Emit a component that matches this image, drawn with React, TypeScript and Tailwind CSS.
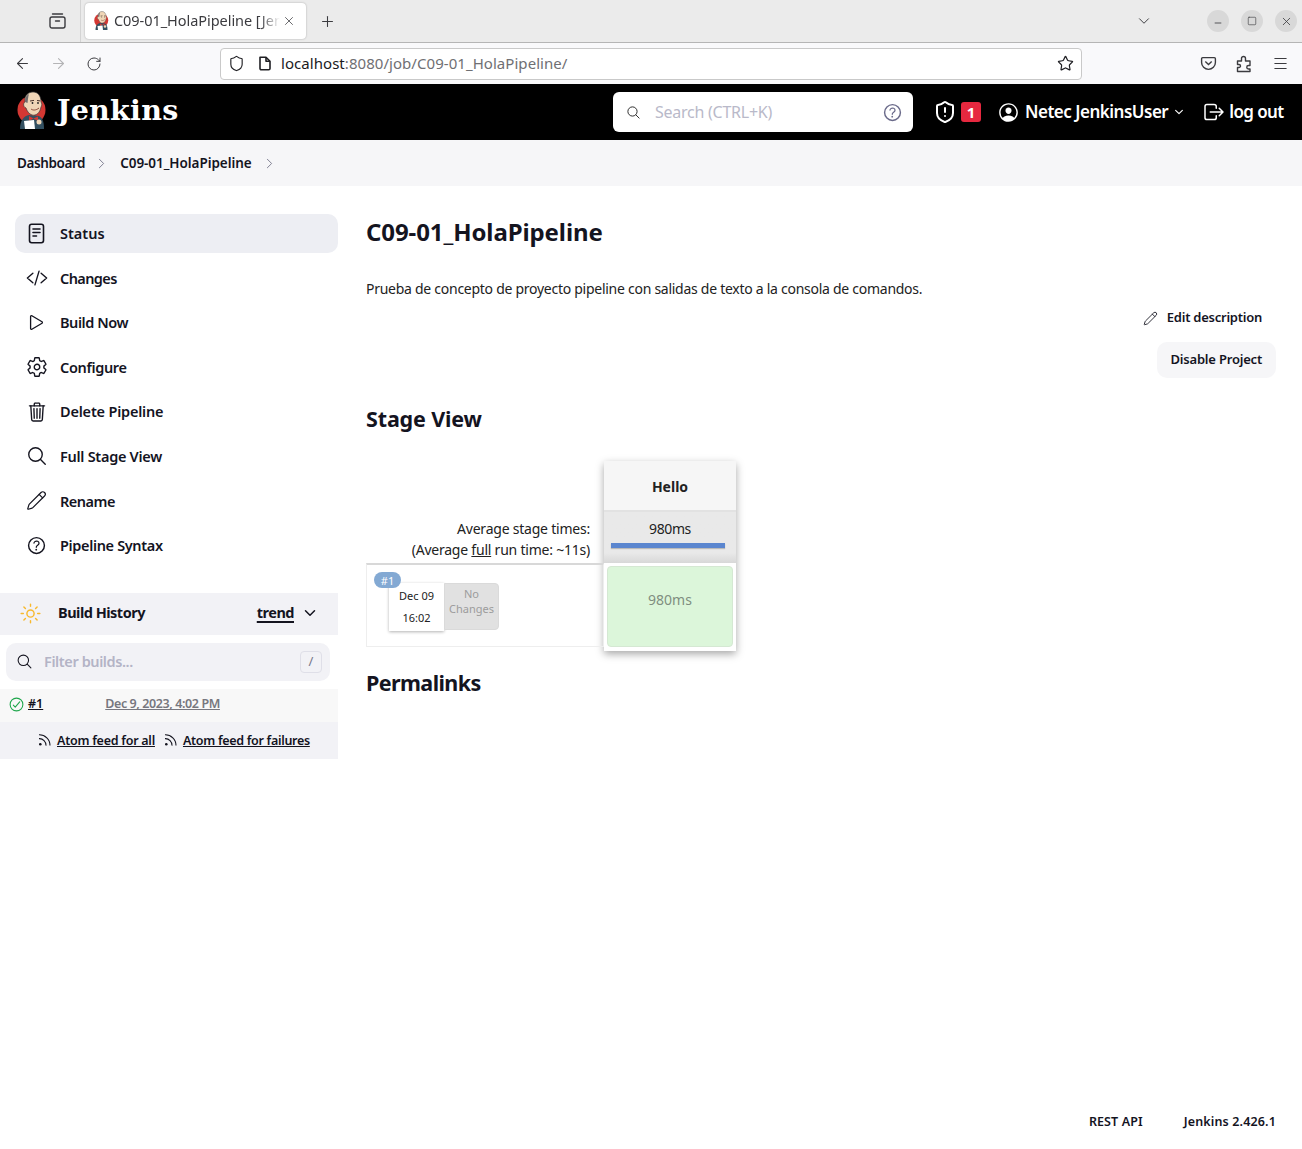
import React from "react";
import { ArrowLeft, ArrowRight, RotateCw, X, Plus, ChevronDown, ChevronRight, Star, Menu, Minus, Square, ShieldAlert, Shield, Pencil } from "lucide-react";
import { IoCodeSlashOutline, IoPlayOutline, IoSettingsOutline, IoTrashOutline, IoSearchOutline, IoHelpCircleOutline, IoSunnyOutline, IoLogOutOutline, IoPersonCircleOutline, IoChevronDown, IoCheckmarkCircleOutline } from "react-icons/io5";

const font = "font-['Noto_Sans',sans-serif]";

function Butler({ size }: { size: number }) {
  return (
    <svg width={size} height={size * 1.3} viewBox="0 0 30 39" className="shrink-0">
      <circle cx="14.5" cy="19" r="14" fill="#d33833" />
      <path d="M3 38 C3 29 7 25 12 24 L22 25 C26 27 27 32 27 38 Z" fill="#335061" />
      <path d="M8 11 C7 4 12 1 16 1 C21 1 24 5 24 11 C25 12 25 15 24 16 C23 22 19 25 15 24 C12 23 10 20 9 17 C6 16 6 12 8 11 Z" fill="#f0d6b7" stroke="#3a3a3a" strokeWidth="0.7" />
      <path d="M8 11 C8 6 10 4 12 3 C11 6 11 9 10.5 12 Z" fill="#6d6b6d" />
      <path d="M13 10 l4 -0.6 M20 9.5 l3 0.4" stroke="#49322a" strokeWidth="1" />
      <circle cx="15.5" cy="12" r="0.9" fill="#222" />
      <circle cx="21" cy="12" r="0.9" fill="#222" />
      <path d="M14 18 C16 19.5 19 19.5 22 17" stroke="#8a4b3a" strokeWidth="1" fill="none" />
      <path d="M12 25 L16.5 27.5 L21 25.5 L21 30 L16.5 27.5 L12 30 Z" fill="#d33833" />
      <path d="M7 30 L17 29 L18 38 L8 38 Z" fill="#fff" />
      <circle cx="22" cy="31" r="2.5" fill="#f0d6b7" />
    </svg>
  );
}

function StatusIcon({ size = 21 }: { size?: number }) {
  return (
    <svg width={size} height={size} viewBox="0 0 21 21" fill="none" stroke="currentColor" strokeWidth="1.6" strokeLinecap="round" className="shrink-0">
      <rect x="3.5" y="1.2" width="14" height="18.6" rx="2.2" />
      <path d="M7 6h7M7 9.5h7M7 13h3.5" />
    </svg>
  );
}

function RenameIcon({ size = 21 }: { size?: number }) {
  return <Pencil size={size} strokeWidth={1.4} />;
}

function Feed() {
  return (
    <svg width="14" height="15" viewBox="0 0 14 15" fill="none" stroke="currentColor" strokeWidth="1.1" className="shrink-0">
      <circle cx="2.3" cy="12.3" r="1.3" fill="currentColor" stroke="none" />
      <path d="M1 6.6a6.6 6.6 0 0 1 7 7" />
      <path d="M1 2.8a10.6 10.6 0 0 1 11 10.8" />
    </svg>
  );
}

const items: [string, any, number, string, boolean?][] = [
  ["Status", StatusIcon, 21, "", true],
  ["Changes", IoCodeSlashOutline, 22, "tracking-[-0.6px]"],
  ["Build Now", IoPlayOutline, 21, "tracking-[-0.45px]"],
  ["Configure", IoSettingsOutline, 22, "tracking-[-0.35px]"],
  ["Delete Pipeline", IoTrashOutline, 22, "tracking-[-0.2px]"],
  ["Full Stage View", IoSearchOutline, 22, "tracking-[-0.28px]"],
  ["Rename", RenameIcon, 21, "tracking-[-0.5px]"],
  ["Pipeline Syntax", IoHelpCircleOutline, 23, "tracking-[-0.35px]"],
];

function BrowserChrome() {
  return (
    <div className="text-[#3b3b3f]">
      <div className="h-[43px] bg-[#ebebeb] border-b border-[#b5b5b5] flex items-start">
        <div className="w-[81px] h-[42px] border-r border-[#d4d4d4] flex items-center justify-end pr-[14px]">
          <svg width="17" height="16" viewBox="0 0 17 16" fill="none" stroke="currentColor" strokeWidth="1.4" strokeLinecap="round">
            <path d="M3.5 1h10" />
            <rect x="1" y="4" width="15" height="11" rx="2" />
            <path d="M6.5 8h4" />
          </svg>
        </div>
        <div className="ml-[4px] mt-[3px] w-[221px] h-[36px] bg-white rounded-[4px] shadow-[0_0_2px_rgba(0,0,0,0.3)] flex items-center pl-[9px] pr-[10px]">
          <Butler size={15} />
          <span className="ml-[5px] text-[14.5px] whitespace-nowrap overflow-hidden w-[167px] tracking-[-0.05px] [mask-image:linear-gradient(to_right,black_88%,transparent)]">C09-01_HolaPipeline [Jenkins]</span>
          <X size={14} strokeWidth={1.3} className="ml-[2px] shrink-0" />
        </div>
        <div className="ml-[13px] h-[42px] flex items-center"><Plus size={17} strokeWidth={1.5} /></div>
        <div className="flex-1" />
        <div className="h-[42px] flex items-center mr-[54px]"><ChevronDown size={18} strokeWidth={1.3} /></div>
        <div className="h-[42px] flex items-center gap-[12px] pr-[5px]">
          <span className="w-[22px] h-[22px] rounded-full bg-[#d8d8d8] flex items-center justify-center pt-[4px]"><Minus size={10} /></span>
          <span className="w-[22px] h-[22px] rounded-full bg-[#d8d8d8] flex items-center justify-center"><Square size={10} strokeWidth={1.5} /></span>
          <span className="w-[22px] h-[22px] rounded-full bg-[#d8d8d8] flex items-center justify-center"><X size={13} strokeWidth={1.5} /></span>
        </div>
      </div>
      <div className="h-[41px] bg-[#f9f9fb] flex items-center relative">
        <div className="w-[220px] flex items-center pl-[14px] gap-[19px] shrink-0">
          <ArrowLeft size={17} strokeWidth={1.5} />
          <ArrowRight size={17} strokeWidth={1.5} className="text-[#b4b4b6]" />
          <RotateCw size={16} strokeWidth={1.5} />
        </div>
        <div className="w-[862px] h-[32px] bg-white border border-[#c9c9c9] rounded-[4px] flex items-center pl-[7px] pr-[6px] text-[15px]">
          <Shield size={17} strokeWidth={1.6} className="text-[#1f1f23]" />
          <svg width="14" height="15" viewBox="0 0 14 15" fill="none" stroke="#1f1f23" strokeWidth="1.6" strokeLinejoin="round" className="ml-[13px]">
            <path d="M2 1.2h6l4 4v7.3a1.3 1.3 0 0 1-1.3 1.3H3.3A1.3 1.3 0 0 1 2 12.5z" />
            <path d="M8 1.2v4h4" />
          </svg>
          <span className="ml-[9px] text-[#1a1a1e] tracking-[0.05px]">localhost<span className="text-[#6f6f73]">:8080/job/C09-01_HolaPipeline/</span></span>
          <Star size={17} strokeWidth={1.7} className="ml-auto mr-[1px] text-[#1f1f23]" />
        </div>
        <div className="flex items-center gap-[19px] ml-[118px]">
          <svg width="17" height="17" viewBox="0 0 16 16" fill="none" stroke="currentColor" strokeWidth="1.3"><path d="M2.5 2.5h11a1 1 0 0 1 1 1V7a6.5 6.5 0 0 1-13 0V3.5a1 1 0 0 1 1-1z" /><path d="M5 6.2 8 9l3-2.8" /></svg>
          <svg width="16" height="18" viewBox="0 0 16 18" fill="none" stroke="currentColor" strokeWidth="1.4" strokeLinejoin="round">
            <path d="M1.5 6h4V3.500a2 2 0 0 1 4 0V6h4.500v4.500h-1.500a1.700 1.700 0 0 0 0 3.500h1.500v2.500H1.500v-4h1.500a1.500 1.500 0 0 0 0-3H1.500z" />
          </svg>
          <Menu size={17} strokeWidth={1.5} className="ml-[1px]" />
        </div>
      </div>
    </div>
  );
}

function JHeader() {
  return (
    <div className="h-[56px] bg-black flex items-center text-white">
      <div className="pl-[17px] flex items-center w-[613px] shrink-0 -mt-[4px]">
        <Butler size={30} />
        <span className="ml-[10px] font-['DejaVu_Serif',serif] font-bold text-[28.5px] tracking-[0.25px] leading-none">Jenkins</span>
      </div>
      <div className="w-[300px] h-[40px] bg-white rounded-[6px] flex items-center px-[13px]">
        <IoSearchOutline size={15} className="text-[#222]" />
        <span className="ml-[14px] text-[#b9b9c9] text-[16px] tracking-[-0.25px]">Search (CTRL+K)</span>
        <IoHelpCircleOutline size={23} className="ml-auto -mr-[4px] text-[#6a6a8a]" />
      </div>
      <ShieldAlert size={24} strokeWidth={2} className="ml-[20px] shrink-0" />
      <span className="ml-[4px] w-[20px] h-[20px] bg-[#e6283f] rounded-[3px] flex items-center justify-center text-[15px] font-bold">1</span>
      <IoPersonCircleOutline size={23} className="ml-[16px] shrink-0" />
      <span className="ml-[5px] text-[17px] font-semibold tracking-[-0.5px] whitespace-nowrap">Netec JenkinsUser</span>
      <IoChevronDown size={12} className="ml-[5px] shrink-0" />
      <IoLogOutOutline size={24} className="ml-[17px] shrink-0" />
      <span className="ml-[3px] text-[17px] font-semibold tracking-[-0.6px] whitespace-nowrap">log out</span>
    </div>
  );
}

function Breadcrumb() {
  return (
    <div className="h-[46px] bg-[#f6f6f8] flex items-center pl-[17px] text-[13.5px] font-semibold text-[#14141f]">
      <span className="tracking-[-0.4px]">Dashboard</span>
      <ChevronRight size={17} strokeWidth={1.3} className="ml-[8px] text-[#77778a]" />
      <span className="ml-[10px] tracking-[-0.05px]">C09-01_HolaPipeline</span>
      <ChevronRight size={17} strokeWidth={1.3} className="ml-[9px] text-[#77778a]" />
    </div>
  );
}

function Sidebar() {
  return (
    <div className="w-[338px] shrink-0 text-[#14141f] pt-[28px]">
      <div className="pl-[15px] flex flex-col">
        {items.map(([label, Icon, s, track, active]) => (
          <div key={label} className={`h-[39px] mb-[5.565px] flex items-center rounded-[10px] ${active ? "bg-[#edeef3]" : ""}`}>
            <span className="w-[45px] pr-[2px] flex justify-center shrink-0"><Icon size={s} /></span>
            <span className={`text-[14.5px] font-semibold pt-[1px] ${track}`}>{label}</span>
          </div>
        ))}
      </div>
      <div className="mt-[22.5px] h-[42px] bg-[#f2f2f6] flex items-center pl-[19px] pr-[20px] pb-[2px]">
        <IoSunnyOutline size={23} className="text-[#f8b92d]" />
        <span className="ml-[16px] text-[14.5px] font-bold tracking-[-0.5px]">Build History</span>
        <span className="ml-auto text-[14.5px] font-bold underline underline-offset-3 decoration-2 tracking-[-0.5px]">trend</span>
        <IoChevronDown size={16} className="ml-[8px]" />
      </div>
      <div className="mt-[8px] ml-[6px] w-[324px] h-[38px] bg-[#f2f2f6] rounded-[10px] flex items-center pl-[10px] pr-[8px] pb-[1px]">
        <IoSearchOutline size={17} />
        <span className="ml-[11px] text-[14.5px] text-[#b4b4c6] font-semibold tracking-[-0.4px]">Filter builds...</span>
        <span className="ml-auto w-[22px] h-[22px] border border-[#dfdfe8] rounded-[4px] flex items-center justify-center text-[13px] text-[#77778a]">/</span>
      </div>
      <div className="mt-[8px] h-[33px] bg-[#f8f8f8] flex items-center pl-[8px] pb-[2px] text-[12.5px] font-semibold">
        <IoCheckmarkCircleOutline size={17} className="text-[#1ea64b]" />
        <span className="ml-[3px] underline">#1</span>
        <span className="ml-[62px] underline text-[#77777f] tracking-[-0.4px]">Dec 9, 2023, 4:02 PM</span>
      </div>
      <div className="h-[37px] bg-[#f2f2f6] flex items-center pl-[38px] text-[12.5px] font-semibold pt-[1px]">
        <span className="-mt-[4px]"><Feed /></span>
        <span className="ml-[5px] underline tracking-[-0.25px]">Atom feed for all</span>
        <span className="-mt-[4px] ml-[9px]"><Feed /></span>
        <span className="ml-[5px] underline tracking-[-0.3px]">Atom feed for failures</span>
      </div>
    </div>
  );
}

function StageView() {
  return (
    <div className="flex w-[372px] mt-[26px]">
      <div className="w-[238px] shrink-0 pt-[51px]">
        <div className="h-[50px] text-right pr-[14px] text-[14px] leading-[21px] text-[#222] pt-[5px] tracking-[-0.22px]">
          <div>Average stage times:</div>
          <div>(Average <span className="underline">full</span> run time: ~11s)</div>
        </div>
        <div className="h-[84px] border border-t-2 border-[#eeeeee] border-t-[#d8d8d8] relative flex items-start pl-[22px] pt-[18px]">
          <span className="absolute left-[7px] top-[7px] w-[27px] h-[16px] rounded-full bg-[#83a9d3] text-white text-[11px] flex items-center justify-center leading-none">#1</span>
          <div className="w-[55px] h-[48px] bg-white shadow-[0_1px_3px_rgba(0,0,0,0.3)] text-[11px] text-[#222] text-center flex flex-col justify-between py-[6px] leading-[14px]">
            <div>Dec 09</div>
            <div>16:02</div>
          </div>
          <div className="w-[55px] h-[47px] bg-[#e1e1e1] border border-[#dadada] rounded-r-[4px] text-[11px] text-[#9c9c9c] text-center leading-[15px] pt-[2px]">
            <div>No</div>
            <div>Changes</div>
          </div>
        </div>
      </div>
      <div className="w-[132px] h-[190px] shrink-0 bg-white shadow-[0_3px_8px_rgba(0,0,0,0.35)] flex flex-col mt-[-1px]">
        <div className="h-[51px] bg-[#f6f6f6] border-b-2 border-[#e2e2e2] flex items-center justify-center text-[14px] font-bold text-[#222] pt-[1px]">Hello</div>
        <div className="h-[51px] bg-gradient-to-b from-[#e9e9e9] from-80% to-[#d8d8d8] pt-[7px] flex flex-col items-center">
          <div className="text-[14px] leading-[20px] text-[#222] tracking-[-0.4px]">980ms</div>
          <div className="mt-[4px] w-[114px] h-[5px] bg-[#5b86cf] self-start ml-[7px] shadow-[0_1px_1px_rgba(0,0,0,0.2)]" />
        </div>
        <div className="m-[3px] h-[81px] bg-[#dcf6da] border border-[#d5e8d3] rounded-[4px] flex items-center justify-center text-[14px] text-[#808e80] pb-[15px]">980ms</div>
      </div>
    </div>
  );
}

function Content() {
  return (
    <div className="flex-1 pl-[28px] pr-[26px] text-[#14141f] relative">
      <h1 className="pt-[29px] text-[24px] leading-[34px] font-bold tracking-[-0.1px]">C09-01_HolaPipeline</h1>
      <p className="mt-[30px] text-[14px] leading-[20px] text-[#222] tracking-[-0.27px]">Prueba de concepto de proyecto pipeline con salidas de texto a la consola de comandos.</p>
      <div className="flex flex-col items-end">
        <div className="h-[38px] flex items-center pr-[14px] text-[13px] font-semibold tracking-[-0.25px]">
          <Pencil size={15} strokeWidth={1.4} className="mr-[9px]" />Edit description
        </div>
        <div className="mt-[5px] h-[36px] px-[14px] bg-[#f6f6f8] rounded-[10px] flex items-center text-[13px] font-semibold tracking-[-0.2px]">Disable Project</div>
      </div>
      <h2 className="mt-[24px] text-[21.5px] leading-[34px] font-bold tracking-[-0.15px]">Stage View</h2>
      <StageView />
      <h2 className="mt-[15px] text-[21.5px] leading-[34px] font-bold tracking-[-0.6px]">Permalinks</h2>
    </div>
  );
}

export default function App() {
  return (
    <div className={`${font} w-[1302px] h-[1149px] bg-white flex flex-col overflow-hidden`}>
      <BrowserChrome />
      <JHeader />
      <Breadcrumb />
      <div className="flex flex-1">
        <Sidebar />
        <Content />
      </div>
      <div className="h-[36px] flex items-start justify-end pr-[26px] text-[12.5px] font-semibold text-[#14141f] gap-[41px]">
        <span className="tracking-[0.1px]">REST API</span>
        <span className="tracking-[0.15px]">Jenkins 2.426.1</span>
      </div>
    </div>
  );
}
